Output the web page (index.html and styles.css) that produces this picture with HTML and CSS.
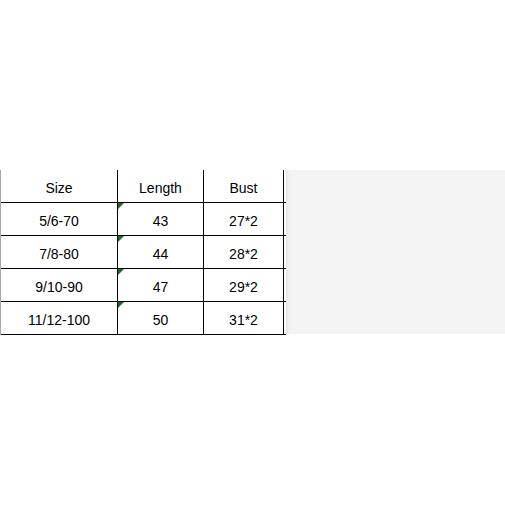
FILE: index.html
```html
<!DOCTYPE html>
<html>
<head>
<meta charset="utf-8">
<link rel="stylesheet" href="styles.css">
</head>
<body>
<div class="page">
  <div class="sheet">
    <div class="row head">
      <div class="cell c1">Size</div>
      <div class="cell c2">Length</div>
      <div class="cell c3">Bust</div>
    </div>
    <div class="row">
      <div class="cell c1">5/6-70</div>
      <div class="cell c2 flag">43</div>
      <div class="cell c3">27*2</div>
    </div>
    <div class="row">
      <div class="cell c1">7/8-80</div>
      <div class="cell c2 flag">44</div>
      <div class="cell c3">28*2</div>
    </div>
    <div class="row">
      <div class="cell c1">9/10-90</div>
      <div class="cell c2 flag">47</div>
      <div class="cell c3">29*2</div>
    </div>
    <div class="row">
      <div class="cell c1">11/12-100</div>
      <div class="cell c2 flag">50</div>
      <div class="cell c3">31*2</div>
    </div>
  </div>
  <div class="panel"></div>
</div>
</body>
</html>
```

FILE: styles.css
```css
html, body {
  margin: 0;
  padding: 0;
  background: #ffffff;
}
body {
  font-family: "Liberation Sans", Arial, sans-serif;
  font-size: 14px;
  color: #000;
}
.page {
  padding-top: 170px;
  display: flex;
  align-items: flex-start;
}
.sheet {
  border-left: 1px solid #a8a8a8;
  display: flex;
  flex-direction: column;
}
.row {
  display: flex;
  border-bottom: 1px solid #000;
  padding-right: 2px;
}
.cell {
  height: 28px;
  padding-top: 4px;
  display: flex;
  align-items: center;
  justify-content: center;
  border-right: 1px solid #000;
  position: relative;
  box-sizing: content-box;
}
.c1 { width: 116px; }
.c2 { width: 85px; }
.c3 { width: 79px; }
.flag::before {
  content: "";
  position: absolute;
  top: 0;
  left: 0;
  width: 0;
  height: 0;
  border-top: 6px solid #1d6b1d;
  border-right: 6px solid transparent;
}
.panel {
  width: 219px;
  height: 164px;
  background: #f4f4f4;
  box-shadow: inset 4px 0 3px -2px #e4e4e4;
}
```
